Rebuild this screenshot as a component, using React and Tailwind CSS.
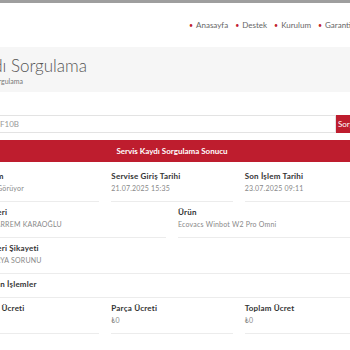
export default function App() {
  const font = { fontFamily: "Lato, 'Open Sans', sans-serif" };
  return (
    <div className="w-[350px] h-[350px] overflow-hidden bg-white" style={font}>
      <div className="h-[3px] bg-[#9e9e9e]" />
      <div className="h-[44px] flex items-center pl-[189px] whitespace-nowrap text-[8px] text-[#666]">
        {["Anasayfa", "Destek", "Kurulum", "Garanti Sorgulama"].map((t) => (
          <span key={t} className="flex items-center mr-[7px]">
            <span className="text-[#c21f32] mr-[3px] text-[7px]">•</span>
            {t}
          </span>
        ))}
      </div>
      <div className="h-[45px] bg-[#f6f6f6] whitespace-nowrap pt-[8px]">
        <div className="ml-[-82px] text-[17px] leading-[22px] font-light text-[#555]">Servis Kaydı Sorgulama</div>
        <div className="ml-[-83px] text-[7px] leading-[8px] text-[#777]">Anasayfa / Servis Kaydı Sorgulama</div>
      </div>
      <div className="ml-[-22px] w-[388px]">
        <div className="mt-[23px] flex h-[18px]">
          <div className="flex-1 border border-[#e3e3e3] flex items-center pl-[21px] text-[8px] text-[#999]">F10B</div>
          <div className="w-[30px] bg-[#be1d2e] text-white text-[8px] flex items-center pl-[2px]">Sorgula</div>
        </div>
        <div className="mt-[7px] h-[22px] bg-[#be1d2e] flex items-center justify-center text-white text-[8px] font-bold">
          Servis Kaydı Sorgulama Sonucu
        </div>
        <div className="mt-[4px] grid grid-cols-3 gap-x-3">
          <Cell label="Durum" value="İşlem Görüyor" />
          <Cell label="Servise Giriş Tarihi" value="21.07.2025 15:35" />
          <Cell label="Son İşlem Tarihi" value="23.07.2025 09:11" />
        </div>
        <div className="grid grid-cols-2 gap-x-3">
          <Cell label="Müşteri" value="MUHARREM KARAOĞLU" />
          <Cell label="Ürün" value="Ecovacs Winbot W2 Pro Omni" />
        </div>
        <Cell label="Müşteri Şikayeti" value="BATARYA SORUNU" />
        <Cell label="Yapılan İşlemler" />
        <div className="grid grid-cols-3 gap-x-3">
          <Cell label="İşçilik Ücreti" value="₺0" />
          <Cell label="Parça Ücreti" value="₺0" />
          <Cell label="Toplam Ücret" value="₺0" />
        </div>
      </div>
    </div>
  );
}

function Cell({ label, value }) {
  return (
    <div className="pt-[4px] pb-[7px] border-b border-[#ececec] whitespace-nowrap">
      <div className="text-[8px] leading-[12px] font-bold text-[#333] tracking-[0.2px]">{label}</div>
      {value && <div className="text-[7px] leading-[12px] text-[#888] tracking-[0.2px]">{value}</div>}
    </div>
  );
}
